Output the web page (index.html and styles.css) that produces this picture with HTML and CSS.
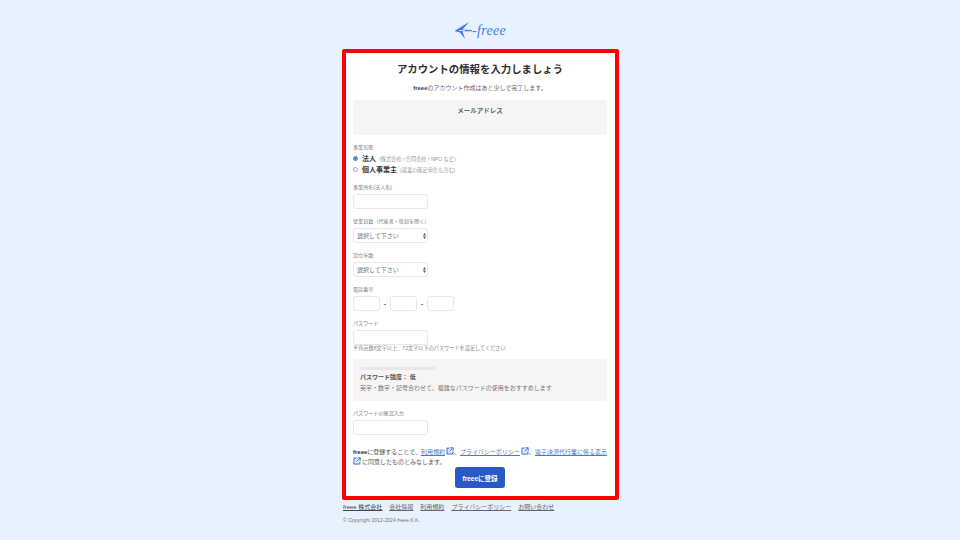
FILE: index.html
```html
<!DOCTYPE html>
<html lang="ja">
<head>
<meta charset="utf-8">
<title>freee</title>
<link rel="stylesheet" href="styles.css">
</head>
<body>
<div class="page">
  <header class="logo">
    <svg class="logo-mark" width="19" height="19" viewBox="0 0 19 19"><path d="M0.5 10 L15 1 L8.5 8.6 L18 9.2 L18 10.2 L8.5 10.2 L11 18 L6 11.6 Z" fill="#3f78e8"/><path d="M5 9.6 L11 9.6" stroke="#fff" stroke-width=".8"/></svg>
    <span class="logo-text">-freee</span>
  </header>
  <main class="card">
    <h1 class="title">アカウントの情報を入力しましょう</h1>
    <p class="sub"><b>freee</b>のアカウント作成はあと少しで完了します。</p>
    <div class="email"><b>メールアドレス</b></div>

    <div class="label first">事業形態</div>
    <div class="radio-row"><span class="radio on"></span><span class="radio-main">法人</span><span class="radio-note">(株式会社 / 合同会社 / NPO など)</span></div>
    <div class="radio-row"><span class="radio"></span><span class="radio-main">個人事業主</span><span class="radio-note">(就業の確定申告も含む)</span></div>

    <div class="label group">事業所名(法人名)</div>
    <div class="input wide"></div>

    <div class="label group">従業員数（代表者・役員を除く）</div>
    <div class="input wide select"><span>選択して下さい</span><svg width="3" height="6" viewBox="0 0 3 6"><path d="M1.5 0 L3 2.4 H0 Z M1.5 6 L0 3.6 H3 Z" fill="#555"/></svg></div>

    <div class="label group">設立年数</div>
    <div class="input wide select"><span>選択して下さい</span><svg width="3" height="6" viewBox="0 0 3 6"><path d="M1.5 0 L3 2.4 H0 Z M1.5 6 L0 3.6 H3 Z" fill="#555"/></svg></div>

    <div class="label group">電話番号</div>
    <div class="phone">
      <div class="input tel"></div><span class="dash">-</span>
      <div class="input tel"></div><span class="dash">-</span>
      <div class="input tel"></div>
    </div>

    <div class="label group">パスワード</div>
    <div class="input wide"></div>
    <p class="hint">半角英数8文字以上、72文字以下のパスワードを設定してください</p>

    <div class="strength">
      <div class="bar"></div>
      <div class="strength-title">パスワード強度： 低</div>
      <div class="strength-text">英字・数字・記号合わせて、複雑なパスワードの使用をおすすめします</div>
    </div>

    <div class="label group">パスワードの確認入力</div>
    <div class="input wide"></div>

    <p class="terms"><b>freee</b>に登録することで、<a>利用規約</a><svg class="ext" viewBox="0 0 8 8"><path d="M3.5 1.2H1v5.8h5.800V4.500M4.500 .8H7.200V3.500M7 1 3.500 4.500" fill="none" stroke="#3f78e8" stroke-width="1"/></svg>、<a>プライバシーポリシー</a><svg class="ext" viewBox="0 0 8 8"><path d="M3.5 1.2H1v5.8h5.800V4.500M4.500 .8H7.200V3.500M7 1 3.500 4.500" fill="none" stroke="#3f78e8" stroke-width="1"/></svg>、<a>電子決済代行業に係る表示</a><br><svg class="ext first-ext" viewBox="0 0 8 8"><path d="M3.5 1.2H1v5.8h5.800V4.500M4.500 .8H7.200V3.500M7 1 3.500 4.500" fill="none" stroke="#3f78e8" stroke-width="1"/></svg>に同意したものとみなします。</p>

    <div class="submit-row"><button class="submit">freeeに登録</button></div>
  </main>
  <footer class="footer">
    <nav class="links"><a>freee 株式会社</a><a>会社情報</a><a>利用規約</a><a>プライバシーポリシー</a><a>お問い合わせ</a></nav>
    <p class="copy">© Copyright 2012-2024 freee K.K.</p>
  </footer>
</div>
</body>
</html>
```
FILE: styles.css
```css
* { box-sizing: border-box; }
html, body { margin: 0; height: 540px; overflow: hidden; }
body {
  background: #e8f1fe;
  color: #323232;
  font-family: "Liberation Sans", "Noto Sans CJK JP", sans-serif;
}
.page { width: 278px; margin: 0 auto; padding-left: 1px; }
.page > * { width: 277px; }
.logo { height: 49px; padding: 21px 1px 0 0; display: flex; justify-content: center; align-items: flex-start; }
.logo-mark { flex: none; }
.logo-text { font-family: "Liberation Serif", serif; font-style: italic; font-size: 14px; line-height: 19px; color: #3d7cf0; letter-spacing: .3px; margin-left: -1px; }
.card {
  height: 451px;
  background: #fff;
  border: 4px solid #f00;
  border-radius: 2px;
  padding: 0 8px 0 7px;
}
.title { margin: 8px 0 0; text-align: center; font-size: 10.4px; line-height: 17px; font-weight: 700; color: #303030; }
.sub { margin: 6px 0 0; text-align: center; font-size: 6px; line-height: 8px; color: #666; }
.sub b { color: #444; }
.email { height: 35px; margin-top: 8px; padding-top: 6px; background: #f6f4f4; text-align: center; font-size: 6.500px; line-height: 9px; color: #666; border-radius: 1px; }
.label { font-size: 5.100px; line-height: 6px; color: #808080; }
.first { margin-top: 9px; }
.group { margin-top: 9px; margin-bottom: 4px; }
.radio-row { display: flex; align-items: center; height: 11px; }
.first + .radio-row { margin-top: 3px; }
.radio { width: 5px; height: 5px; border-radius: 50%; border: .6px solid #aaa; background: #fff; margin-right: 4px; flex: none; }
.radio.on { border: .6px solid #2b7de9; background: radial-gradient(circle, #2b7de9 55%, #fff 70%); }
.radio-main { font-size: 7px; font-weight: 700; color: #383838; line-height: 11px; }
.radio-note { font-size: 5.200px; color: #999; margin-left: 3px; }
.input { height: 15px; border: 1px solid #e8e8e8; border-radius: 3px; background: #fff; }
.wide { width: 75px; }
.select { display: flex; align-items: center; justify-content: space-between; padding: 0 1px 0 3px; font-size: 6px; color: #707070; border-radius: 4px; box-shadow: 0 0 1px #eee; }
.phone { display: flex; align-items: center; }
.tel { width: 27px; }
.dash { width: 10px; text-align: center; font-size: 7px; font-weight: 700; color: #666; }
.hint { margin: 0; font-size: 5.170px; line-height: 7px; color: #888; }
.strength { height: 42px; margin-top: 7px; padding: 8px 7px 0; background: #f6f4f4; border-radius: 1px; }
.bar { width: 76px; height: 3px; background: #e8e8e8; border-radius: 2px; }
.strength-title { margin-top: 3px; font-size: 6px; line-height: 9px; font-weight: 700; color: #555; }
.strength-text { margin-top: 2px; font-size: 6px; line-height: 9px; color: #777; }
.terms { margin: 12px 0 0; font-size: 6px; line-height: 9.500px; color: #555; white-space: nowrap; }
.terms b { color: #333; }
.terms a { color: #5578b0; text-decoration: underline; }
.ext { width: 8px; height: 8px; vertical-align: -1.5px; margin-left: 1px; background: #e3edfb; }
.first-ext { margin: 0 1px 0 0; }
.submit-row { display: flex; justify-content: center; }
.submit { width: 50px; height: 21px; padding: 0; border: 0; border-radius: 3px; background: #2859c5; color: #fff; font: 700 6.500px "Liberation Sans", "Noto Sans CJK JP", sans-serif; }
.footer { padding: 3px 0 0 1px; }
.links { display: flex; gap: 7px; font-size: 6px; line-height: 9px; color: #666; }
.links a { text-decoration: underline; }
.links a:first-child { color: #444; }
.copy { margin: 5px 0 0; font-size: 5.100px; line-height: 7px; color: #777; }
```
